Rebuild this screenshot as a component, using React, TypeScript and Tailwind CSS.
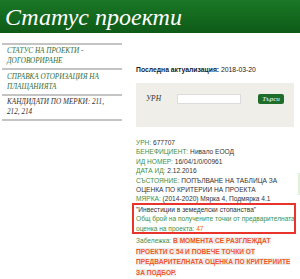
export default function App() {
  const serif = { fontFamily: '"Liberation Serif", "DejaVu Serif", serif' };
  const sans = { fontFamily: '"Liberation Sans", Arial, sans-serif' };
  const g = 'text-[#3f8f45]';
  return (
    <div className="w-[300px] h-[279px] bg-white overflow-hidden relative" style={sans}>
      <div className="h-[34px] bg-gradient-to-b from-[#1a7826] to-[#0e5a17] border-b border-white flex items-center pl-[5px]">
        <span className="text-white italic text-[24px] leading-none" style={serif}>Статус проекти</span>
      </div>
      <div className="flex">
        <div className="w-[120px] ml-[2px] mt-[9px] border-t-2 border-[#c4c4c4] shrink-0">
          <div className="border-b-2 border-[#c4c4c4] pl-[5px] pt-[2px] pb-[2px] leading-[9.5px] text-[7.2px] italic text-[#2f6e3c] whitespace-nowrap" style={serif}>
            СТАТУС НА ПРОЕКТИ -<br />ДОГОВОРИРАНЕ
          </div>
          <div className="border-b-2 border-[#c4c4c4] pl-[5px] pt-[3px] pb-[2px] leading-[9.5px] text-[7.2px] italic text-[#2f6e3c] whitespace-nowrap" style={serif}>
            СПРАВКА ОТОРИЗАЦИЯ НА<br />ПЛАЩАНИЯТА
          </div>
          <div className="border-b-2 border-[#c4c4c4] pl-[5px] pt-[2px] pb-[2px] leading-[9.5px] text-[7.2px] italic text-[#333] whitespace-nowrap" style={serif}>
            КАНДИДАТИ ПО МЕРКИ: 211,<br />212, 214
          </div>
        </div>
        <div className="ml-[14px] w-[158px] mt-[31px] relative">
          <div className="text-[6.8px] leading-[10px] text-[#222] whitespace-nowrap">
            <span className="font-bold">Последна актуализация:</span> 2018-03-20
          </div>
          <div className="mt-[8px] h-[44px] bg-[#efeee9] flex items-start pt-[11px] pl-[10px]">
            <span className="italic text-[7.5px] leading-[10px] text-[#333] w-[31px]" style={serif}>УРН</span>
            <div className="w-[64px] h-[10px] bg-white border border-[#dcdcdc]" />
            <div className="ml-[17px] w-[26px] h-[10px] bg-[#1f6d2a] rounded-[2px] flex items-center justify-center">
              <span className="text-white italic text-[7px] leading-none" style={serif}>Търси</span>
            </div>
          </div>
          <div className="mt-[11px] text-[6.6px] leading-[9.4px] text-[#333] whitespace-nowrap">
            <div><span className={g}>УРН:</span> 677707</div>
            <div><span className={g}>БЕНЕФИЦИЕНТ:</span> Нивало ЕООД</div>
            <div><span className={g}>ИД НОМЕР:</span> 16/04/1/0/00961</div>
            <div><span className={g}>ДАТА ИД:</span> 2.12.2016</div>
            <div><span className={g}>СЪСТОЯНИЕ:</span> ПОПЪЛВАНЕ НА ТАБЛИЦА ЗА</div>
            <div>ОЦЕНКА ПО КРИТЕРИИ НА ПРОЕКТА</div>
            <div><span className={g}>МЯРКА:</span> (2014-2020) Мярка 4, Подмярка 4.1</div>
            <div className="relative mt-[1px]">
              <div>"Инвестиции в земеделски стопанства"</div>
              <div className={g}>Общ брой на получените точки от предварителната</div>
              <div className={g}>оценка на проекта: <span className="text-[#f05a28]">47</span></div>
              <div className="absolute left-[-4px] right-[-2px] top-[-2px] bottom-[-1px] border-2 border-[#e8342c]" />
            </div>
            <div className="mt-[3px] leading-[10.6px]">
              <div><span className={g}>Забележка:</span>{' '}<span className="font-bold text-[#f05a28] bg-[#ececec]">В МОМЕНТА СЕ РАЗГЛЕЖДАТ</span></div>
              <div><span className="font-bold text-[#f05a28] bg-[#ececec]">ПРОЕКТИ С 54 И ПОВЕЧЕ ТОЧКИ ОТ</span></div>
              <div><span className="font-bold text-[#f05a28] bg-[#ececec]">ПРЕДВАРИТЕЛНАТА ОЦЕНКА ПО КРИТЕРИИТЕ</span></div>
              <div><span className="font-bold text-[#f05a28] bg-[#ececec]">ЗА ПОДБОР.</span></div>
            </div>
          </div>
        </div>
      </div>
      <div className="absolute right-0 top-[173px] w-[2px] h-[22px] bg-[#dff0d8]" />
    </div>
  );
}
